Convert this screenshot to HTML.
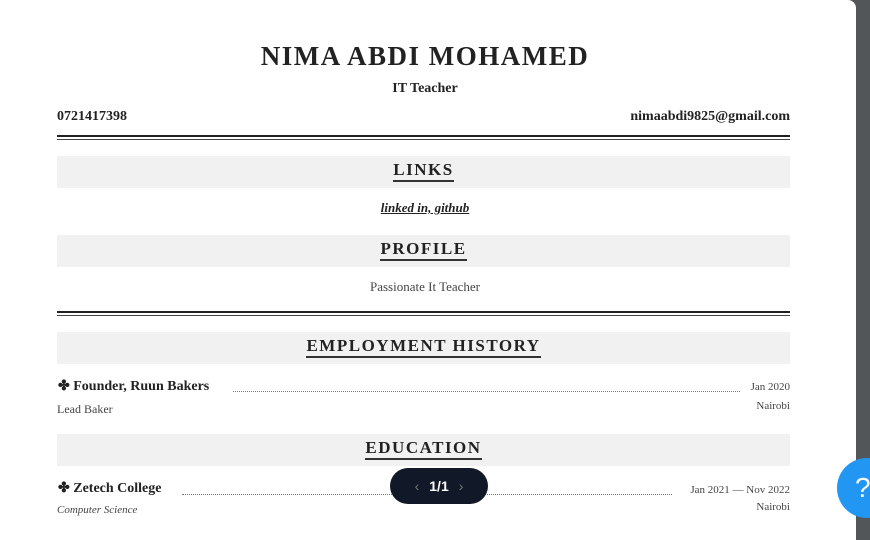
<!DOCTYPE html>
<html><head><style>
body{margin:0;width:870px;height:527px;overflow:hidden;background:#525659;position:relative;font-family:"Liberation Serif",serif;color:#222}
.page{position:absolute;left:0;top:0;width:856px;height:540px;background:#fff;border-top-right-radius:8px}
.a{position:absolute;white-space:nowrap}
.bar{position:absolute;left:57px;width:733px;height:32px;background:#f1f1f1}
.h{position:absolute;left:0;right:0;text-align:center;top:4px;font-size:17px;letter-spacing:1.5px;font-weight:bold}
.h span{border-bottom:2px solid #333;padding-bottom:1px}
.dl{position:absolute;left:57px;width:733px;height:2px;background:#222}
.tl{position:absolute;left:57px;width:733px;height:1px;background:#444}
.dots{position:absolute;border-bottom:1px dotted #777;height:0}
.d{font-size:11px;color:#444}
</style></head><body>
<div class="page">
<div class="a" style="left:0;width:850px;text-align:center;top:41px;font-size:27px;letter-spacing:1.5px;font-weight:bold;color:#222">NIMA ABDI MOHAMED</div>
<div class="a" style="left:0;width:850px;text-align:center;top:81px;font-size:14px;font-weight:bold">IT Teacher</div>
<div class="a" style="left:57px;top:109px;font-size:14px;font-weight:bold">0721417398</div>
<div class="a" style="right:66px;top:109px;font-size:14px;font-weight:bold">nimaabdi9825@gmail.com</div>
<div class="dl" style="top:135px"></div><div class="tl" style="top:139px"></div>
<div class="bar" style="top:156px"><div class="h"><span>LINKS</span></div></div>
<div class="a" style="left:0;width:850px;text-align:center;top:200px;font-size:13px;font-style:italic;font-weight:bold;text-decoration:underline">linked in, github</div>
<div class="bar" style="top:235px"><div class="h"><span>PROFILE</span></div></div>
<div class="a" style="left:0;width:850px;text-align:center;top:279px;font-size:13px;color:#444">Passionate It Teacher</div>
<div class="dl" style="top:311px"></div><div class="tl" style="top:315px"></div>
<div class="bar" style="top:332px"><div class="h"><span>EMPLOYMENT HISTORY</span></div></div>
<div class="a" style="left:58px;top:378px;font-size:14px;font-weight:bold">✤ Founder, Ruun Bakers</div>
<div class="dots" style="left:233px;width:507px;top:391px"></div>
<div class="a d" style="right:66px;top:381px">Jan 2020</div>
<div class="a" style="left:57px;top:402px;font-size:12px;color:#444">Lead Baker</div>
<div class="a d" style="right:66px;top:400px">Nairobi</div>
<div class="bar" style="top:434px"><div class="h"><span>EDUCATION</span></div></div>
<div class="a" style="left:58px;top:480px;font-size:14px;font-weight:bold">✤ Zetech College</div>
<div class="dots" style="left:182px;width:490px;top:494px"></div>
<div class="a d" style="right:66px;top:484px">Jan 2021 — Nov 2022</div>
<div class="a" style="left:57px;top:504px;font-size:11px;font-style:italic;color:#444">Computer Science</div>
<div class="a d" style="right:66px;top:501px">Nairobi</div>
</div>
<div class="a" style="left:390px;top:468px;width:98px;height:36px;border-radius:18px;background:#111827;color:#fff;font-family:'Liberation Sans',sans-serif;font-size:14px;font-weight:bold;text-align:center;line-height:36px"><span style="color:#777;font-weight:normal;margin-right:10px">‹</span>1/1<span style="color:#777;font-weight:normal;margin-left:10px">›</span></div>
<div class="a" style="left:837px;top:458px;width:60px;height:60px;border-radius:30px;background:#2196f3;color:#fff;font-family:'Liberation Sans',sans-serif;font-size:28px;line-height:60px;padding-left:18px;box-sizing:border-box">?</div>
</body></html>
